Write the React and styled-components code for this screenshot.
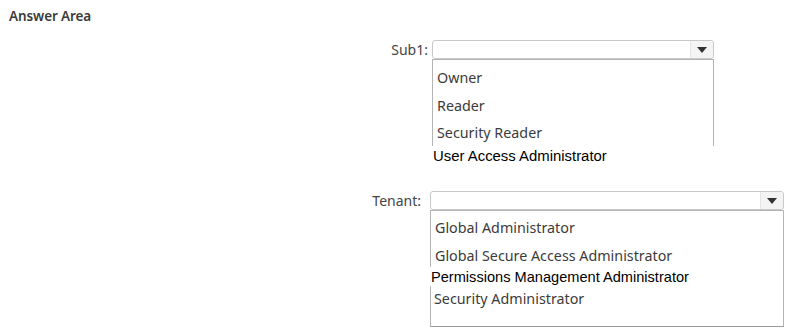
import React from 'react';
import styled, { createGlobalStyle } from 'styled-components';

const Global = createGlobalStyle`
  html, body {
    margin: 0;
    padding: 0;
    background: #fff;
  }
  body {
    width: 794px;
    height: 335px;
    overflow: hidden;
    font-family: 'Noto Sans', 'Open Sans', sans-serif;
  }
`;

const Page = styled.div`
  padding: 7px 0 0 9px;
`;

const Title = styled.h2`
  margin: 0;
  font-size: 13.5px;
  font-weight: 600;
  color: #3a3a3a;
  letter-spacing: -0.1px;
`;

const Form = styled.div`
  display: flex;
  flex-direction: column;
  margin-top: 15px;
`;

const Row = styled.div`
  display: flex;
  align-items: flex-start;
  margin-top: ${p => p.$top || 0}px;
`;

const Label = styled.div`
  width: ${p => p.$width}px;
  text-align: right;
  padding-right: ${p => p.$gap}px;
  font-size: 14px;
  line-height: 19px;
  color: #444;
  box-sizing: border-box;
`;

const Field = styled.div`
  display: flex;
  flex-direction: column;
  width: ${p => p.$width}px;
`;

const Select = styled.div`
  display: flex;
  height: 19px;
  border: 1px solid #c8c8c8;
  border-radius: 3px;
  box-sizing: border-box;
  background: #fff;
`;

const Value = styled.div`
  flex: 1;
`;

const Arrow = styled.div`
  width: 22px;
  display: flex;
  align-items: center;
  justify-content: center;
  border-left: 1px solid #e4e4e4;
  background: #f4f4f4;
  border-radius: 0 3px 3px 0;

  &::after {
    content: '';
    border-left: 5px solid transparent;
    border-right: 5px solid transparent;
    border-top: 6px solid #333;
  }
`;

const List = styled.div`
  display: flex;
  flex-direction: column;
  border: 1px solid #b4b4b4;
  border-bottom: ${p => (p.$open ? 'none' : '1px solid #9a9a9a')};
  height: ${p => p.$height}px;
  padding-top: ${p => p.$pad}px;
  box-sizing: border-box;
`;

const Option = styled.div`
  height: ${p => p.$h}px;
  display: flex;
  align-items: center;
  padding-left: ${p => p.$indent}px;
  font-size: 14.3px;
  color: #3b3b3b;
  white-space: nowrap;
`;

const Pasted = styled.div`
  height: ${p => p.$h}px;
  margin: ${p => p.$mt || 0}px ${p => (p.$wide ? -1 : 0)}px 0 -1px;
  display: flex;
  align-items: center;
  padding-left: 1px;
  background: #fff;
  font-family: 'Liberation Sans', Arial, sans-serif;
  font-size: ${p => p.$size}px;
  color: #000;
  white-space: nowrap;
  position: relative;
`;

export default function App() {
  return (
    <Page>
      <Global />
      <Title>Answer Area</Title>
      <Form>
        <Row>
          <Label $width={423} $gap={4}>Sub1:</Label>
          <Field $width={282}>
            <Select>
              <Value />
              <Arrow />
            </Select>
            <List $open $height={107} $pad={4}>
              <Option $h={28} $indent={4}>Owner</Option>
              <Option $h={28} $indent={4}>Reader</Option>
              <Option $h={27} $indent={4}>Security Reader</Option>
              <Pasted $wide $h={20} $size={14.9}>User Access Administrator</Pasted>
            </List>
          </Field>
        </Row>
        <Row $top={25}>
          <Label $width={421} $gap={9}>Tenant:</Label>
          <Field $width={354}>
            <Select>
              <Value />
              <Arrow />
            </Select>
            <List $height={117} $pad={2}>
              <Option $h={29} $indent={4}>Global Administrator</Option>
              <Option $h={27} $indent={4}>Global Secure Access Administrator</Option>
              <Pasted $h={19} $mt={-2} $size={14.6}>Permissions Management Administrator</Pasted>
              <Option $h={24} $indent={3}>Security Administrator</Option>
            </List>
          </Field>
        </Row>
      </Form>
    </Page>
  );
}
